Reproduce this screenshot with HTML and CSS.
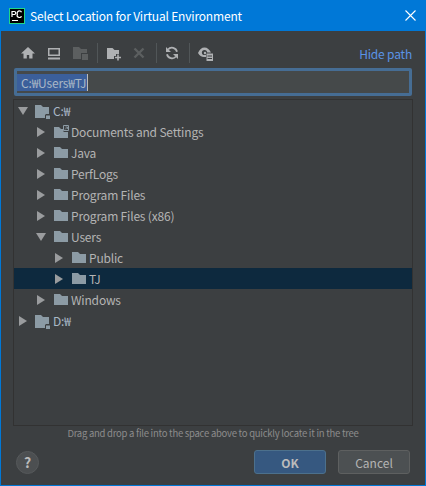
FILE: index.html
```html
<!DOCTYPE html>
<html lang="en">
<head>
    <meta charset="UTF-8">
    <title>Select Location for Virtual Environment</title>
    <link rel="stylesheet" href="styles.css">
</head>
<body>
    <div class="dialog">
        <div class="title-bar">
            <svg class="app-logo" width="16" height="16" viewBox="0 0 16 16">
                <rect width="16" height="16" fill="#21d789"/>
                <rect x="1" y="1" width="14" height="14" fill="#000"/>
                <rect x="3" y="12" width="6" height="1" fill="#fff"/>
                <path d="M3 9V3.500h2.200a1.400 1.400 0 0 1 0 3H3M12.500 4.200A2 2 0 0 0 8.400 6.200a2 2 0 0 0 4.100 2" fill="none" stroke="#fff" stroke-width="1.200"/>
            </svg>
            <span class="title-text">Select Location for Virtual Environment</span>
            <svg class="close-icon" width="11" height="11" viewBox="0 0 11 11">
                <path d="M.5.500l10 10M10.500.500l-10 10" stroke="#fff" stroke-width="1.100" fill="none"/>
            </svg>
        </div>
        <div class="content">
            <div class="toolbar">
                <div class="tools">
                    <svg class="tool" width="16" height="16" viewBox="0 0 16 16"><path d="M8 2L1 8.500h2.500V13.500h3.300V10h2.400v3.500h3.300V8.500H15z" fill="#afb1b3"/></svg>
                    <svg class="tool" width="16" height="16" viewBox="0 0 16 16"><path d="M2 3h12v8H2zM3.500 4.500v5h9v-5zM2 12.500h12V14.500H2z" fill="#afb1b3" fill-rule="evenodd"/></svg>
                    <svg class="tool" width="16" height="16" viewBox="0 0 16 16"><path d="M1 2h6l2 2h6v4H9v6H1z" fill="#5c5f60"/><rect x="10" y="9" width="6" height="6" fill="#5c5f60"/></svg>
                    <span class="sep"></span>
                    <svg class="tool" width="16" height="16" viewBox="0 0 16 16"><path d="M2 3h5.500l2 2H14v4h-3v2H9v3H2z" fill="#afb1b3"/><path d="M13 9.500v6M10 12.500h6" stroke="#afb1b3" stroke-width="1.600"/></svg>
                    <svg class="tool" width="16" height="16" viewBox="0 0 16 16"><path d="M3.500 3.500l9 9M12.500 3.500l-9 9" stroke="#5c5f60" stroke-width="2.400"/></svg>
                    <span class="sep"></span>
                    <svg class="tool" width="16" height="16" viewBox="0 0 16 16"><path d="M13 6.800A5.200 5.200 0 0 0 4 4.500M3 9.200A5.200 5.200 0 0 0 12 11.500" fill="none" stroke="#afb1b3" stroke-width="1.800"/><path d="M2 2v5h5zM14 14V9H9z" fill="#afb1b3"/></svg>
                    <span class="sep"></span>
                    <svg class="tool" width="16" height="16" viewBox="0 0 16 16"><path d="M1 8c1.400-3.500 3.700-5.500 6.500-5.500S12.600 4.500 14 7.500H9V12H7C4.600 12 2.400 10.500 1 8z" fill="#afb1b3"/><circle cx="7.500" cy="7.500" r="2.600" fill="#3c3f41"/><circle cx="8" cy="8" r="1.200" fill="#afb1b3"/><path d="M9.500 8.500H16V16H9.500z" fill="#afb1b3"/><path d="M10.500 11h4.500M10.500 13.500h4.500" stroke="#3c3f41"/></svg>
                </div>
                <a class="hide-path">Hide path</a>
            </div>
            <div class="path-field"><span class="path-selected">C:₩Users₩TJ</span></div>
            <div class="tree">
                <div class="row"><i class="arrow open"></i><svg class="folder" width="16" height="16" viewBox="0 0 16 16"><path d="M0 2h6l2 2h6v8H10v3H0z" fill="#8c9ba5"/><rect x="10.500" y="11" width="5" height="5" fill="#3c3f41"/><rect x="11" y="12.500" width="4" height="3.500" fill="#8c9ba5"/></svg><span class="drive-name">C:₩</span></div>
                <div class="row level-1"><i class="arrow"></i><svg class="folder" width="16" height="16" viewBox="0 0 16 16"><path d="M1 3h5l2 2h2.500v3H15v6H1z" fill="#8c9ba5"/><path d="M10.500 1.500h5v5h-5z" fill="#3c3f41" stroke="#8c9ba5"/><path d="M12 5.500l2.300-2.300M12.500 3h2v2" stroke="#8c9ba5" fill="none" stroke-width=".8"/></svg><span>Documents and Settings</span></div>
                <div class="row level-1"><i class="arrow"></i><svg class="folder" width="16" height="16" viewBox="0 0 16 16"><path d="M1 2h6l2 2h6v9H1z" fill="#8c9ba5"/></svg><span>Java</span></div>
                <div class="row level-1"><i class="arrow"></i><svg class="folder" width="16" height="16" viewBox="0 0 16 16"><path d="M1 2h6l2 2h6v9H1z" fill="#8c9ba5"/></svg><span>PerfLogs</span></div>
                <div class="row level-1"><i class="arrow"></i><svg class="folder" width="16" height="16" viewBox="0 0 16 16"><path d="M1 2h6l2 2h6v9H1z" fill="#8c9ba5"/></svg><span>Program Files</span></div>
                <div class="row level-1"><i class="arrow"></i><svg class="folder" width="16" height="16" viewBox="0 0 16 16"><path d="M1 2h6l2 2h6v9H1z" fill="#8c9ba5"/></svg><span>Program Files (x86)</span></div>
                <div class="row level-1"><i class="arrow open"></i><svg class="folder" width="16" height="16" viewBox="0 0 16 16"><path d="M1 2h6l2 2h6v9H1z" fill="#8c9ba5"/></svg><span>Users</span></div>
                <div class="row level-2"><i class="arrow"></i><svg class="folder" width="16" height="16" viewBox="0 0 16 16"><path d="M1 2h6l2 2h6v9H1z" fill="#8c9ba5"/></svg><span>Public</span></div>
                <div class="row level-2 selected"><i class="arrow"></i><svg class="folder" width="16" height="16" viewBox="0 0 16 16"><path d="M1 2h6l2 2h6v9H1z" fill="#8c9ba5"/></svg><span>TJ</span></div>
                <div class="row level-1"><i class="arrow"></i><svg class="folder" width="16" height="16" viewBox="0 0 16 16"><path d="M1 2h6l2 2h6v9H1z" fill="#8c9ba5"/></svg><span>Windows</span></div>
                <div class="row"><i class="arrow"></i><svg class="folder" width="16" height="16" viewBox="0 0 16 16"><path d="M0 2h6l2 2h6v8H10v3H0z" fill="#8c9ba5"/><rect x="10.500" y="11" width="5" height="5" fill="#3c3f41"/><rect x="11" y="12.500" width="4" height="3.500" fill="#8c9ba5"/></svg><span class="drive-name">D:₩</span></div>
            </div>
            <div class="hint">Drag and drop a file into the space above to quickly locate it in the tree</div>
            <div class="footer">
                <div class="help">?</div>
                <div class="buttons">
                    <button class="btn btn-ok">OK</button>
                    <button class="btn">Cancel</button>
                </div>
            </div>
        </div>
    </div>
</body>
</html>
```

FILE: styles.css
```css
* {
    box-sizing: border-box;
    margin: 0;
    padding: 0;
}

html, body {
    width: 426px;
    height: 486px;
    overflow: hidden;
}

body {
    font-family: "Noto Sans CJK KR", "Open Sans", sans-serif;
    font-size: 12px;
    letter-spacing: -0.18px;
    color: #b4b4b4;
    background: #3c3f41;
}

.dialog {
    width: 426px;
    height: 486px;
    display: flex;
    flex-direction: column;
    border: 1px solid #0078d7;
    border-top: 0;
}

.title-bar {
    height: 31px;
    flex: none;
    display: flex;
    align-items: center;
    background: #0078d7;
    color: #fff;
    padding: 0 9px 0 8px;
}

.title-text {
    flex: 1;
    margin-left: 5px;
    margin-top: -1px;
}

.content {
    flex: 1;
    display: flex;
    flex-direction: column;
    padding: 10px 12px 2px 12px;
}

.toolbar {
    height: 24px;
    flex: none;
    display: flex;
    align-items: center;
    justify-content: space-between;
    padding: 0 1px 0 7px;
    margin-bottom: 3px;
}

.tools {
    display: flex;
    align-items: center;
    gap: 8px;
}

.tool {
    display: block;
}

.tool + .tool {
    margin-left: 2px;
}

.sep {
    width: 1px;
    height: 20px;
    margin-left: 1px;
    background: #515658;
}

.sep + .tool {
    margin-left: -1px;
}

.hide-path {
    color: #5a93e6;
}

.path-field {
    height: 28px;
    flex: none;
    margin: 0 1px;
    background: #45494a;
    border: 3px solid #466d94;
    border-radius: 2px;
    padding: 0 0 0 0;
    display: flex;
    align-items: center;
}

.path-selected {
    background: #3b5f9b;
    color: #a9b7c6;
    line-height: 17px;
    padding: 0 1px 0 4px;
    border-right: 1px solid #bbbbbb;
}

.tree {
    height: 327px;
    flex: none;
    margin-top: 3px;
    border: 1px solid #323232;
}

.row {
    height: 21px;
    display: flex;
    align-items: center;
    padding-left: 4px;
}

.level-1 {
    padding-left: 22px;
}

.level-2 {
    padding-left: 40px;
}

.selected {
    background: #0d293e;
}

.arrow {
    width: 0;
    height: 0;
    margin-right: 8px;
    margin-left: 1px;
    border-style: solid;
    border-width: 5px 0 5px 8px;
    border-color: transparent transparent transparent #9a9c9e;
}

.arrow.open {
    margin-left: 0;
    margin-right: 7px;
    width: 10px;
    border-width: 8px 5px 0 5px;
    border-color: #9a9c9e transparent transparent transparent;
}

.folder {
    flex: none;
    margin-right: 2px;
}

.drive-name {
    color: #a9b7c6;
}

.hint {
    height: 15px;
    flex: none;
    font-size: 9.5px;
    letter-spacing: -0.25px;
    line-height: 15px;
    text-align: center;
    color: #8c8c8c;
}

.footer {
    flex: 1;
    display: flex;
    align-items: center;
    justify-content: space-between;
    padding: 0 3px;
}

.help {
    width: 23px;
    height: 23px;
    border-radius: 50%;
    background: #4c4f51;
    border: 1px solid #56595b;
    color: #bbb;
    font-weight: bold;
    font-size: 14px;
    line-height: 20px;
    text-align: center;
}

.buttons {
    display: flex;
    gap: 12px;
}

.btn {
    width: 72px;
    height: 24px;
    font-family: inherit;
    font-size: 12px;
    border-radius: 3px;
    border: 1px solid #5e6060;
    background: #4c5052;
    color: #b4b4b4;
}

.btn-ok {
    background: #365880;
    border-color: #4c708c;
    color: #bbbbbb;
    font-weight: bold;
}
```
